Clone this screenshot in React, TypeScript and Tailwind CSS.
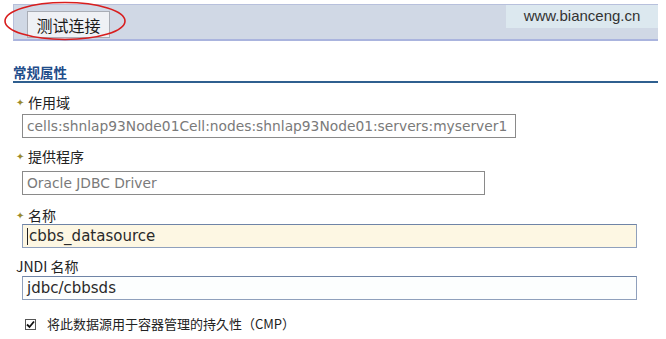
import React from "react"

const cjk = { fontFamily: '"Noto Sans CJK SC", "Noto Sans", sans-serif' }

const Star = () => (
  <span className="mr-[4px] text-[10px] leading-none text-[#9a8a2e]">✦</span>
)

interface IFieldProps {
  label: string
  required?: boolean
  value: string
  width: string
  tone?: "plain" | "edit" | "active"
  labelClass?: string
}

const Field = (props: IFieldProps) => {
  const { label, required, value, width, tone = "plain", labelClass } = props
  const box =
    tone === "plain"
      ? "border border-[#8a8a8a] bg-white text-[#7a7a7a] text-[13.8px]"
      : tone === "active"
        ? "border border-[#8fa0bc] border-t-[#6f84a6] bg-[#fdf7e3] text-[#2a2a2a] text-[15px]"
        : "border border-[#8fa0bc] border-t-[#6f84a6] bg-[#fcfefe] text-[#2a2a2a] text-[15px]"
  return (
    <div className="flex flex-col">
      <div
        className={"flex h-[14px] items-center text-[14px] leading-[14px] text-[#222] " + (labelClass ?? "")}
        style={cjk}
      >
        {required ? <Star /> : null}
        <span>{label}</span>
      </div>
      <div
        className={"ml-[6px] flex h-[24px] items-center px-[4px] leading-[22px] " + width + " " + box}
        style={{ fontFamily: '"DejaVu Sans", Verdana, sans-serif' }}
      >
        {tone === "active" ? <span className="mr-[1px] h-[17px] w-[1px] bg-[#222]" /> : null}
        <span className="whitespace-nowrap">{value}</span>
      </div>
    </div>
  )
}

const App = () => {
  return (
    <div className="relative h-[339px] w-[666px] overflow-hidden bg-white">
      <div className="ml-[13px] mt-[4px] flex h-[37px] w-[645px] items-start border-t border-b-2 border-l border-[#b7c0dc] border-b-[#aab4de] bg-[#d0d8e5]">
        <button
          className="ml-[13px] mt-[6px] flex h-[27px] w-[83px] items-center justify-center border border-[#a9adb5] bg-[#eff1f5] text-[16px] text-[#1a1a1a]"
          style={cjk}
        >
          测试连接
        </button>
        <div
          className="ml-auto flex h-[23px] w-[152px] items-center justify-center bg-[#dce8ef] text-[15px] text-[#333]"
          style={{ fontFamily: '"Liberation Sans", Arial, sans-serif' }}
        >
          www.bianceng.cn
        </div>
      </div>

      <div className="ml-[13px] mt-[23px] h-[19px] w-[645px] border-b-2 border-[#2f5f8f] pb-[1px]">
        <div className="text-[13.5px] font-bold leading-[16px] text-[#1f4d8a]" style={cjk}>
          常规属性
        </div>
      </div>

      <div className="ml-[16px] flex flex-col">
        <div className="mt-[12px]">
          <Field
            label="作用域"
            required
            value="cells:shnlap93Node01Cell:nodes:shnlap93Node01:servers:myserver1"
            width="w-[494px]"
            labelClass="mb-[5px]"
          />
        </div>
        <div className="mt-[11px]">
          <Field label="提供程序" required value="Oracle JDBC Driver" width="w-[463px]" labelClass="mb-[8px]" />
        </div>
        <div className="mt-[13px]">
          <Field label="名称" required value="cbbs_datasource" width="w-[615px]" tone="active" labelClass="mb-[2px]" />
        </div>
        <div className="mt-[11px]">
          <Field label="JNDI 名称" value="jdbc/cbbsds" width="w-[615px]" tone="edit" labelClass="mb-[3px]" />
        </div>
        <div className="ml-[9px] mt-[16px] flex h-[16px] items-center text-[13px] leading-[16px] text-[#222]" style={cjk}>
          <span className="flex h-[11px] w-[11px] items-center justify-center border border-[#555] bg-white">
            <svg width="9" height="9" viewBox="0 0 9 9">
              <path d="M1 4.5 L3.5 7 L8 1.5" fill="none" stroke="#111" strokeWidth="1.8" />
            </svg>
          </span>
          <span className="ml-[11px]">将此数据源用于容器管理的持久性（CMP）</span>
        </div>
      </div>

      <svg className="pointer-events-none absolute left-0 top-0" width="140" height="45" viewBox="0 0 140 45">
        <ellipse cx="65" cy="21" rx="60" ry="18.5" fill="none" stroke="#d81e1e" strokeWidth="1.6" />
      </svg>
    </div>
  )
}

export default App
